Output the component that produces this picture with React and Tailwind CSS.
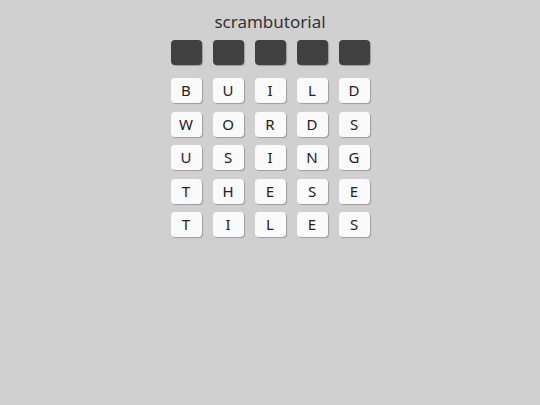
import React from "react";

const rows = ["BUILD", "WORDS", "USING", "THESE", "TILES"];

export default function App() {
  return (
    <div className="w-[540px] h-[405px] bg-[#d0d0d0] flex flex-col items-center" style={{ fontFamily: '"Noto Sans", sans-serif' }}>
      <div className="mt-[10px] text-[17px] leading-[24px] text-[#333]">scrambutorial</div>
      <div className="mt-[6px] flex gap-[11px]">
        {[0, 1, 2, 3, 4].map((i) => (
          <div key={i} className="w-[31px] h-[25px] rounded-[4px] bg-[#404040] shadow-[1px_1px_1px_rgba(0,0,0,0.25)]" />
        ))}
      </div>
      <div className="mt-[13px] flex flex-col gap-[8.5px]">
        {rows.map((r, ri) => (
          <div key={ri} className="flex gap-[11px]">
            {r.split("").map((c, ci) => (
              <div key={ci} className="w-[31px] h-[25px] rounded-[4px] bg-[#fafafa] shadow-[1px_1px_1px_rgba(0,0,0,0.25)] flex items-center justify-center text-[15px] text-[#222]">
                {c}
              </div>
            ))}
          </div>
        ))}
      </div>
    </div>
  );
}
